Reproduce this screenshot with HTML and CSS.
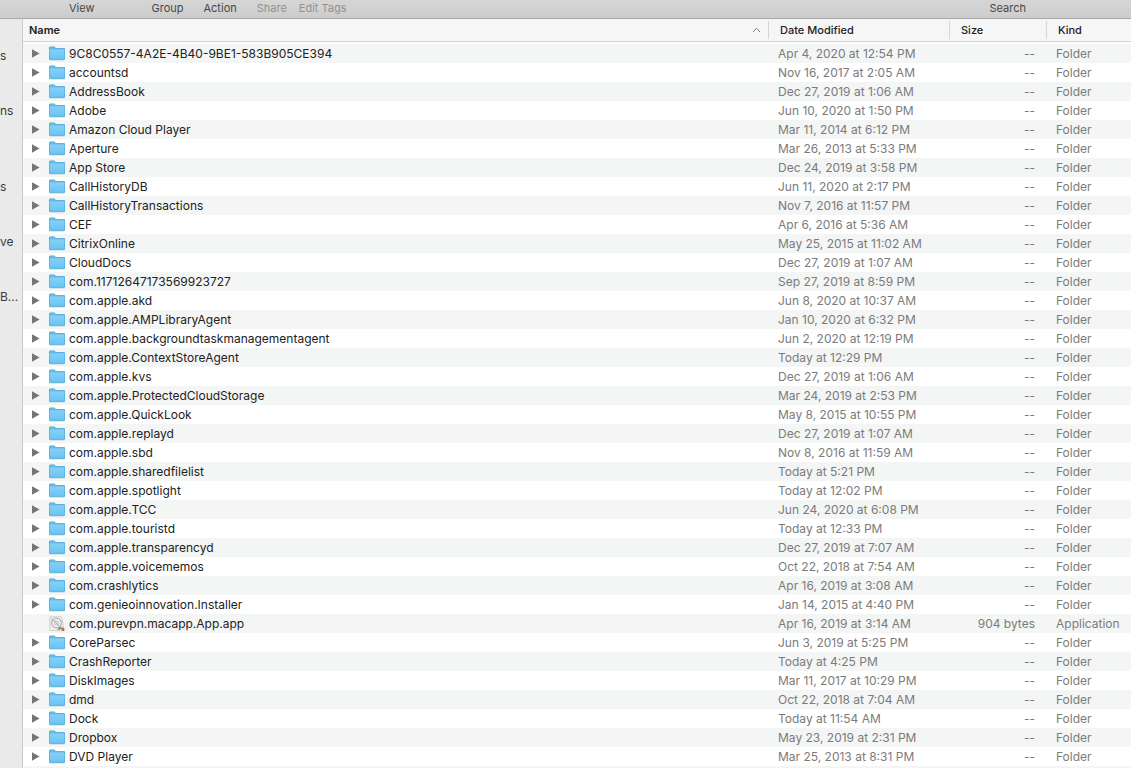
FILE: index.html
```html
<!DOCTYPE html>
<html lang="en">
<head>
  <meta charset="UTF-8">
  <meta name="viewport" content="width=device-width, initial-scale=1.0">
  <title>Application Support</title>
  <link rel="stylesheet" href="styles.css">
</head>
<body>
  <!-- Icons -->
  <svg class="sprite" aria-hidden="true">
    <defs>
      <linearGradient id="folder-fill" x1="0" y1="0" x2="0" y2="1">
        <stop offset="0" stop-color="#82d0f8"/>
        <stop offset="1" stop-color="#69c5f5"/>
      </linearGradient>
    </defs>
    <symbol id="icon-arrow" viewBox="0 0 8 9">
      <path d="M0 0.3 L7.6 4.5 L0 8.7 Z" fill="#757575"/>
    </symbol>
    <symbol id="icon-folder" viewBox="0 0 16 15">
      <path d="M0.3 13.2 H15.7 V14 Q15.7 14.4 15.2 14.4 H0.8 Q0.3 14.4 0.3 14 Z" fill="#c3d2da"/>
      <path d="M0 2 Q0 0.5 1.2 0.5 H5 Q5.8 0.5 6.2 1.2 L6.6 1.9 H14.9 Q16 1.9 16 3 V13 Q16 13.7 15.3 13.7 H0.7 Q0 13.7 0 13 Z" fill="#4fa9da"/>
      <path d="M1 1.2 H5.2 L6 2.6 H15.2 V3.3 H0.8 Z" fill="#69bce6"/>
      <path d="M0.6 4.1 H15.4 V12.9 H0.6 Z" fill="url(#folder-fill)"/>
      <path d="M0.6 3.8 H15.4" stroke="#a4def9" stroke-width="0.7"/>
    </symbol>
    <symbol id="icon-app" viewBox="0 0 16 16">
      <path d="M1.5 0.8 H11.5 Q12.5 0.8 12.8 1.8 L14.8 13.2 Q15 14.6 13.8 14.6 H2 Q0.8 14.6 0.8 13.4 V1.6 Q0.8 0.8 1.5 0.8 Z" fill="#f1f1f0" stroke="#c4c4c3" stroke-width="0.8"/>
      <circle cx="7.5" cy="7" r="4.8" fill="#fafafa" stroke="#a8a8a8" stroke-width="1.1"/>
      <circle cx="7.5" cy="7" r="2.4" fill="#e4e4e4" stroke="#bbb" stroke-width="0.8"/>
      <path d="M3 2.5 L11.5 11.5" stroke="#a8a8a8" stroke-width="1"/>
      <path d="M8 13.4 L11.5 10.4 L13 12 L10 14 Z" fill="#9a8375"/>
      <path d="M12 11 L15.4 12.4 L15.2 15.2 L12.6 14.6 Z" fill="#a8714b"/>
    </symbol>
  </svg>

  <!-- Toolbar -->
  <header class="toolbar">
    <button type="button" class="tool-view">View</button>
    <button type="button">Group</button>
    <button type="button">Action</button>
    <button type="button" disabled>Share</button>
    <button type="button" disabled>Edit Tags</button>
    <button type="button" class="tool-search">Search</button>
  </header>

  <div class="window">
    <!-- Sidebar -->
    <nav class="sidebar">
      <a href="#">s</a>
      <a href="#">ns</a>
      <a href="#" class="section">s</a>
      <a href="#">ve</a>
      <a href="#">B...</a>
    </nav>

    <!-- File list -->
    <main class="files">
      <table>
        <colgroup>
          <col>
          <col class="col-date">
          <col class="col-size">
          <col class="col-kind">
        </colgroup>
        <thead>
          <tr>
            <th aria-sort="ascending">
              <button type="button" class="sorted">Name
                <svg width="9" height="6" viewBox="0 0 9 6" aria-hidden="true"><path d="M1 5 L4.5 1.2 L8 5" fill="none" stroke="#808080"/></svg>
              </button>
            </th>
            <th><button type="button">Date Modified</button></th>
            <th><button type="button">Size</button></th>
            <th><button type="button">Kind</button></th>
          </tr>
        </thead>
        <tbody id="file-rows"></tbody>
      </table>
    </main>
  </div>

  <script>
    const files = [
      ['9C8C0557-4A2E-4B40-9BE1-583B905CE394', 'Apr 4, 2020 at 12:54 PM'],
      ['accountsd', 'Nov 16, 2017 at 2:05 AM'],
      ['AddressBook', 'Dec 27, 2019 at 1:06 AM'],
      ['Adobe', 'Jun 10, 2020 at 1:50 PM'],
      ['Amazon Cloud Player', 'Mar 11, 2014 at 6:12 PM'],
      ['Aperture', 'Mar 26, 2013 at 5:33 PM'],
      ['App Store', 'Dec 24, 2019 at 3:58 PM'],
      ['CallHistoryDB', 'Jun 11, 2020 at 2:17 PM'],
      ['CallHistoryTransactions', 'Nov 7, 2016 at 11:57 PM'],
      ['CEF', 'Apr 6, 2016 at 5:36 AM'],
      ['CitrixOnline', 'May 25, 2015 at 11:02 AM'],
      ['CloudDocs', 'Dec 27, 2019 at 1:07 AM'],
      ['com.11712647173569923727', 'Sep 27, 2019 at 8:59 PM'],
      ['com.apple.akd', 'Jun 8, 2020 at 10:37 AM'],
      ['com.apple.AMPLibraryAgent', 'Jan 10, 2020 at 6:32 PM'],
      ['com.apple.backgroundtaskmanagementagent', 'Jun 2, 2020 at 12:19 PM'],
      ['com.apple.ContextStoreAgent', 'Today at 12:29 PM'],
      ['com.apple.kvs', 'Dec 27, 2019 at 1:06 AM'],
      ['com.apple.ProtectedCloudStorage', 'Mar 24, 2019 at 2:53 PM'],
      ['com.apple.QuickLook', 'May 8, 2015 at 10:55 PM'],
      ['com.apple.replayd', 'Dec 27, 2019 at 1:07 AM'],
      ['com.apple.sbd', 'Nov 8, 2016 at 11:59 AM'],
      ['com.apple.sharedfilelist', 'Today at 5:21 PM'],
      ['com.apple.spotlight', 'Today at 12:02 PM'],
      ['com.apple.TCC', 'Jun 24, 2020 at 6:08 PM'],
      ['com.apple.touristd', 'Today at 12:33 PM'],
      ['com.apple.transparencyd', 'Dec 27, 2019 at 7:07 AM'],
      ['com.apple.voicememos', 'Oct 22, 2018 at 7:54 AM'],
      ['com.crashlytics', 'Apr 16, 2019 at 3:08 AM'],
      ['com.genieoinnovation.Installer', 'Jan 14, 2015 at 4:40 PM'],
      ['com.purevpn.macapp.App.app', 'Apr 16, 2019 at 3:14 AM', '904 bytes', 'Application'],
      ['CoreParsec', 'Jun 3, 2019 at 5:25 PM'],
      ['CrashReporter', 'Today at 4:25 PM'],
      ['DiskImages', 'Mar 11, 2017 at 10:29 PM'],
      ['dmd', 'Oct 22, 2018 at 7:04 AM'],
      ['Dock', 'Today at 11:54 AM'],
      ['Dropbox', 'May 23, 2019 at 2:31 PM'],
      ['DVD Player', 'Mar 25, 2013 at 8:31 PM']
    ];

    function rowHtml([name, date, size = '--', kind = 'Folder']) {
      const isFolder = kind === 'Folder';
      const arrow = isFolder
        ? `<button type="button" class="arrow" aria-label="Expand ${name}"><svg width="8" height="9"><use href="#icon-arrow"/></svg></button>`
        : '<span class="arrow"></span>';
      const icon = isFolder
        ? '<svg width="16" height="15"><use href="#icon-folder"/></svg>'
        : '<svg width="16" height="16"><use href="#icon-app"/></svg>';
      return `<tr>
        <td><div class="name">${arrow}${icon}<span>${name}</span></div></td>
        <td>${date}</td>
        <td class="size">${size}</td>
        <td>${kind}</td>
      </tr>`;
    }

    // the last empty row continues the stripes under the list
    document.getElementById('file-rows').innerHTML =
      files.map(rowHtml).join('') + '<tr><td colspan="4"></td></tr>';
  </script>
</body>
</html>
```
FILE: styles.css
```css
:root {
  --text: #222;
  --text-muted: #7b7b7b;
  --line: #d0d0d0;
  --stripe: #f4f5f5;
}

* {
  box-sizing: border-box;
}

body {
  margin: 0;
  height: 100vh;
  display: flex;
  flex-direction: column;
  overflow: hidden;
  background: #fff;
  color: var(--text);
  font-family: Inter, "Liberation Sans", sans-serif;
  font-size: 12px;
}

button {
  padding: 0;
  border: none;
  background: none;
  color: inherit;
  font: inherit;
}

.sprite {
  position: absolute;
  width: 0;
  height: 0;
}

/* Toolbar */
.toolbar {
  flex: none;
  display: flex;
  height: 19px;
  padding: 0 105px 2px 69px;
  border-bottom: 1px solid #a9a9a9;
  background: linear-gradient(#d6d6d6, #cdcdcd);
  color: #484848;
  font-size: 11px;
}

.toolbar button {
  margin-right: 20px;
}

.toolbar button:disabled {
  margin-right: 12px;
  color: #929292;
}

.toolbar .tool-view {
  margin-right: 57px;
}

.toolbar .tool-search {
  margin: 0 0 0 auto;
}

.window {
  flex: 1;
  display: flex;
  min-height: 0;
}

/* Sidebar */
.sidebar {
  flex: none;
  display: flex;
  flex-direction: column;
  gap: 35px;
  width: 23px;
  padding-top: 27px;
  border-right: 1px solid #cacaca;
  background: #eaeaea;
}

.sidebar a {
  color: #3c3c3c;
  line-height: 20px;
  text-decoration: none;
  white-space: nowrap;
}

.sidebar .section {
  margin-top: 21px;
}

/* File list */
.files {
  flex: 1;
  min-width: 0;
  overflow: hidden;
}

table {
  width: 100%;
  table-layout: fixed;
  border-collapse: separate;
  border-spacing: 0;
}

.col-date {
  width: 181px;
}

.col-size {
  width: 97px;
}

.col-kind {
  width: 85px;
}

th {
  height: 23px;
  padding: 2px 0;
  border-bottom: 1px solid var(--line);
  background: #f6f6f6;
  font-size: 11px;
  font-weight: 500;
}

th button {
  display: flex;
  align-items: center;
  width: 100%;
  height: 18px;
  padding-left: 11px;
  border-left: 1px solid #d6d6d6;
}

th .sorted {
  justify-content: space-between;
  padding: 0 7px 0 6px;
  border-left: none;
  font-weight: 600;
}

tbody::before {
  content: "";
  display: block;
  height: 2px;
}

td {
  height: 19px;
  padding: 0 0 0 10px;
  color: var(--text-muted);
  line-height: 19px;
  white-space: nowrap;
}

tbody tr:nth-child(odd) {
  background: var(--stripe);
}

td:first-child {
  padding-left: 9px;
  color: var(--text);
}

td.size {
  padding-right: 11px;
  text-align: right;
}

.name {
  display: flex;
  align-items: center;
  height: 19px;
}

.name svg {
  display: block;
}

.name span:last-child {
  margin-left: 4px;
}

.arrow {
  display: flex;
  width: 17px;
}
```
